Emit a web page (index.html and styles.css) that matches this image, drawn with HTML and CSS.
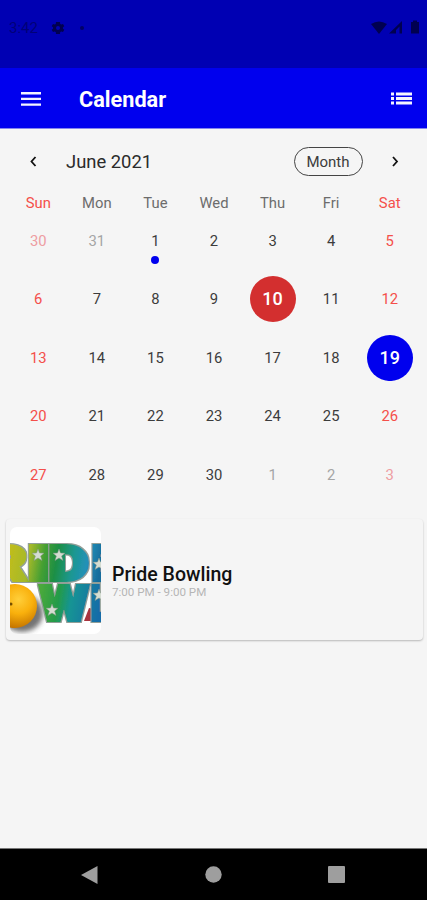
FILE: index.html
```
<!DOCTYPE html>
<html lang="en">
  <head>
    <meta charset="UTF-8" />
    <meta name="viewport" content="width=device-width, initial-scale=1.0" />
    <title>Calendar</title>
    <link rel="stylesheet" href="styles.css">
  </head>
  <body>
    <div class="status-bar">
      <span class="clock">3:42</span>
      <svg class="gear" width="16" height="16" viewBox="0 0 24 24">
        <path d="M19.4 13a7.5 7.5 0 0 0 0-2l2.1-1.6-2-3.5-2.5 1a7 7 0 0 0-1.7-1L15 3H9l-.3 2.9a7 7 0 0 0-1.7 1l-2.5-1-2 3.5L4.6 11a7.5 7.5 0 0 0 0 2l-2.1 1.6 2 3.5 2.5-1a7 7 0 0 0 1.7 1L9 21h6l.3-2.9a7 7 0 0 0 1.7-1l2.5 1 2-3.5zM12 15a3 3 0 1 1 0-6 3 3 0 0 1 0 6z" />
      </svg>
      <span class="notice-dot"></span>
      <svg class="signals" width="49" height="16" viewBox="0 0 49 16">
        <path d="M0 4Q8 -1 16 4L8 14z" />
        <path d="M18 13.5L31 1v12.500h-2.500V6.500L25 10v3.500z" />
        <path d="M40 2h2V.5h4V2h2v11.500h-8z" />
      </svg>
    </div>

    <header class="app-bar">
      <svg class="menu-icon" width="20" height="14" viewBox="0 0 20 14">
        <path d="M0 0h20v2.400H0zM0 5.700h20v2.400H0zM0 11.400h20v2.400H0z" />
      </svg>
      <h1>Calendar</h1>
      <svg class="list-icon" width="21" height="14" viewBox="0 0 21 14">
        <path d="M0 .5h3v3H0zM5 .5h16v3H5zM0 5h3v3H0zM5 5h16v3H5zM0 9.500h3v3H0zM5 9.500h16v3H5z" />
      </svg>
    </header>

    <main>
      <section class="calendar">
        <div class="calendar-header">
          <svg class="chevron" width="7" height="11" viewBox="0 0 7 11"><path d="M5.500 1L1.500 5.500l4 4.500" /></svg>
          <h2>June 2021</h2>
          <button type="button">Month</button>
          <svg class="chevron" width="7" height="11" viewBox="0 0 7 11"><path d="M1 1l4 4.500L1 10" /></svg>
        </div>

        <div class="weekdays">
          <span class="weekend">Sun</span>
          <span>Mon</span>
          <span>Tue</span>
          <span>Wed</span>
          <span>Thu</span>
          <span>Fri</span>
          <span class="weekend">Sat</span>
        </div>

        <div class="days">
          <span class="weekend outside">30</span>
          <span class="outside">31</span>
          <span class="has-event">1</span>
          <span>2</span>
          <span>3</span>
          <span>4</span>
          <span class="weekend">5</span>

          <span class="weekend">6</span>
          <span>7</span>
          <span>8</span>
          <span>9</span>
          <span><b class="today">10</b></span>
          <span>11</span>
          <span class="weekend">12</span>

          <span class="weekend">13</span>
          <span>14</span>
          <span>15</span>
          <span>16</span>
          <span>17</span>
          <span>18</span>
          <span class="has-event"><b class="selected">19</b></span>

          <span class="weekend">20</span>
          <span>21</span>
          <span>22</span>
          <span>23</span>
          <span>24</span>
          <span>25</span>
          <span class="weekend">26</span>

          <span class="weekend">27</span>
          <span>28</span>
          <span>29</span>
          <span>30</span>
          <span class="outside">1</span>
          <span class="outside">2</span>
          <span class="weekend outside">3</span>
        </div>
      </section>

      <article class="event-card">
        <svg class="event-image" width="91" height="107" viewBox="0 0 91 107">
          <defs>
            <linearGradient id="rainbow" gradientUnits="userSpaceOnUse" x1="0" y1="20" x2="91" y2="35">
              <stop offset="0" stop-color="#c0bd1c" />
              <stop offset=".22" stop-color="#a5b92a" />
              <stop offset=".38" stop-color="#459f32" />
              <stop offset=".52" stop-color="#1d8f45" />
              <stop offset=".7" stop-color="#1c9791" />
              <stop offset=".85" stop-color="#2291b8" />
              <stop offset="1" stop-color="#176c9c" />
            </linearGradient>
            <linearGradient id="rainbowLow" gradientUnits="userSpaceOnUse" x1="27" y1="60" x2="91" y2="70">
              <stop offset="0" stop-color="#52ac38" />
              <stop offset=".35" stop-color="#249b48" />
              <stop offset=".55" stop-color="#159494" />
              <stop offset="1" stop-color="#146ca8" />
            </linearGradient>
            <radialGradient id="ball" cx=".58" cy=".35" r=".65">
              <stop offset="0" stop-color="#ffcf3a" />
              <stop offset=".5" stop-color="#f9b00c" />
              <stop offset="1" stop-color="#c67600" />
            </radialGradient>
            <filter id="soft"><feGaussianBlur stdDeviation="2.500" /></filter>
            <!-- silver rim round the letters -->
            <filter id="rim" filterUnits="userSpaceOnUse" x="-30" y="0" width="160" height="107">
              <feMorphology in="SourceAlpha" operator="dilate" radius="1" result="wide" />
              <feFlood flood-color="#929f98" />
              <feComposite in2="wide" operator="in" result="edge" />
              <feMerge>
                <feMergeNode in="edge" />
                <feMergeNode in="SourceGraphic" />
              </feMerge>
            </filter>
            <path id="star" d="M0-6L1.500-2 6-1.800 2.600 1 4 5.500 0 3-4 5.500-2.600 1-6-1.800-1.500-2z" />
          </defs>
          <rect width="91" height="107" fill="#fff" />
          <g class="logo-text upper">
            <text x="-23" y="53" textLength="40" lengthAdjust="spacingAndGlyphs">R</text>
            <text x="17" y="53" textLength="23" lengthAdjust="spacingAndGlyphs">I</text>
            <text x="38.500" y="53" textLength="40" lengthAdjust="spacingAndGlyphs">D</text>
            <text x="82" y="53" textLength="18" lengthAdjust="spacingAndGlyphs">E</text>
          </g>
          <ellipse cx="12" cy="86" rx="21" ry="19" fill="#444" opacity=".75" filter="url(#soft)" />
          <circle cx="5" cy="79" r="22" fill="url(#ball)" />
          <circle cx="1" cy="77" r="1.500" fill="#765000" />
          <path d="M74 94l5-13 5 1v12z" fill="#a9343f" />
          <g class="logo-text lower">
            <text x="30" y="93" textLength="48" lengthAdjust="spacingAndGlyphs">W</text>
            <text x="81" y="93" textLength="18" lengthAdjust="spacingAndGlyphs">L</text>
          </g>
          <g fill="#d5ddd2" stroke="#879486" stroke-width=".5">
            <use href="#star" x="28" y="28" />
            <use href="#star" x="49" y="28" />
            <use href="#star" x="42" y="83" />
            <use href="#star" x="89" y="37" />
            <use href="#star" x="89" y="68" />
          </g>
        </svg>
        <div class="event-info">
          <h3>Pride Bowling</h3>
          <p>7:00 PM - 9:00 PM</p>
        </div>
      </article>
    </main>

    <nav class="system-nav">
      <svg width="17" height="20" viewBox="0 0 17 20"><path d="M0 10L16.500 1v18z" /></svg>
      <svg width="17" height="17" viewBox="0 0 17 17"><circle cx="8.500" cy="8.500" r="8.200" /></svg>
      <svg width="17" height="17" viewBox="0 0 17 17"><rect width="17" height="17" rx="1" /></svg>
    </nav>
  </body>
</html>
```
FILE: styles.css
```
* {
  box-sizing: border-box;
}
body {
  display: flex;
  flex-direction: column;
  height: 900px;
  margin: 0;
  overflow: hidden;
  background-color: #f5f5f5;
  color: #3c3c3c;
  font-family: Roboto, sans-serif;
}
h1,
h2,
h3,
p {
  margin: 0;
}
svg {
  display: block;
  flex-shrink: 0;
}
.status-bar {
  display: flex;
  align-items: center;
  height: 68px;
  padding: 0 7px 13px 9px;
  background-color: #0000b3;
  color: #000078;
  font-size: 15px;
}
.status-bar svg {
  fill: #000050;
}
.clock {
  width: 41px;
}
.notice-dot {
  width: 4px;
  height: 4px;
  margin-left: 14px;
  border-radius: 50%;
  background-color: #000065;
}
.signals {
  margin-left: auto;
}
.app-bar {
  display: flex;
  align-items: center;
  height: 61px;
  padding: 1px 15px 0 21px;
  border-bottom: 1px solid #8585ee;
  background-color: #0000ee;
  color: #fff;
}
.app-bar svg {
  fill: #f3f3ff;
}
.app-bar h1 {
  margin-left: 38px;
  padding-top: 1px;
  font-size: 21.7px;
  font-weight: 700;
}
.list-icon {
  margin-left: auto;
}
main {
  flex: 1;
}
.calendar-header {
  display: flex;
  align-items: center;
  height: 65px;
  padding: 0 28px 0 30px;
}
.calendar-header h2 {
  margin-left: 29px;
  color: #2b2b2b;
  font-size: 18.4px;
  font-weight: 400;
}
.calendar-header button {
  width: 69px;
  height: 29px;
  margin-left: auto;
  margin-right: 29px;
  padding: 0 1px 0 0;
  border: 1px solid #444;
  border-radius: 15px;
  background: none;
  color: #3c3c3c;
  font: 15px Roboto, sans-serif;
}
.chevron {
  fill: none;
  stroke: #111;
  stroke-width: 1.8;
}
.weekdays,
.days {
  display: grid;
  grid-template-columns: repeat(7, 1fr);
  padding: 0 8px 0 9px;
  text-align: center;
}
.weekdays {
  height: 17.5px;
  color: #6c6c6c;
  font-size: 14.8px;
  line-height: 18px;
}
.days {
  grid-auto-rows: 58.5px;
  font-size: 14.8px;
}
.days span {
  position: relative;
  display: flex;
  align-items: center;
  justify-content: center;
}
.weekdays .weekend,
.days .weekend {
  color: #f44f4a;
}
.days .outside {
  color: #a5a5a5;
}
.days .weekend.outside {
  color: #ee9da2;
}
/* event marker under the day number */
.has-event::after {
  content: "";
  position: absolute;
  left: 50%;
  bottom: 6px;
  width: 8px;
  height: 8px;
  margin-left: -4px;
  border-radius: 50%;
  background-color: #0000ee;
}
.days b {
  width: 46px;
  height: 46px;
  border-radius: 50%;
  color: #fff;
  font-size: 18px;
  font-weight: 500;
  line-height: 46px;
}
.today {
  background-color: #d32f2f;
}
.selected {
  background-color: #0000ee;
}
.event-card {
  display: flex;
  align-items: center;
  height: 121px;
  margin: 14.5px 4px 0 6px;
  padding: 2px 4px 0;
  border-radius: 4px;
  background-color: #f5f5f5;
  box-shadow: 0 1px 2px rgba(0, 0, 0, 0.25);
}
.event-image {
  border-radius: 7px;
}
.logo-text {
  font-family: Roboto, sans-serif;
  font-size: 48px;
  font-weight: 900;
  stroke-width: 4px;
  filter: url(#rim);
}
.upper {
  fill: url(#rainbow);
  stroke: url(#rainbow);
}
.lower {
  fill: url(#rainbowLow);
  stroke: url(#rainbowLow);
}
.event-info {
  margin-left: 11px;
  padding-top: 2px;
}
.event-info h3 {
  color: #111;
  font-size: 19.5px;
  font-weight: 500;
  line-height: 22px;
}
.event-info p {
  color: #b5b5b5;
  font-size: 11.6px;
  line-height: 13px;
}
.system-nav {
  display: flex;
  align-items: center;
  justify-content: space-between;
  height: 52px;
  padding: 0 82px 0 81px;
  border-top: 1px solid #777;
  background-color: #000;
}
.system-nav svg {
  fill: #9e9e9e;
}
```
